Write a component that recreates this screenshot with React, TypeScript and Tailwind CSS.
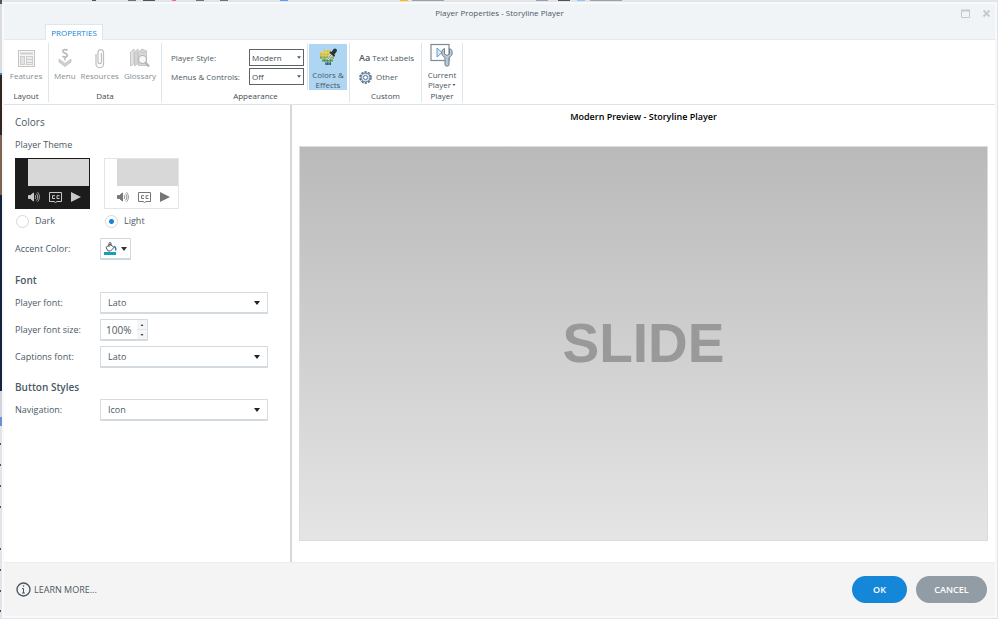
import { useState } from 'react'
import type { ReactNode } from 'react'
import clsx from 'clsx'

// slice of the window that sits behind the dialog, top to bottom
const backdropEdge = [
  { className: 'h-1 bg-gray-600' },
  { className: 'h-[69px] bg-[#dcdcdf]' },
  { className: 'h-[2px] bg-[#2d8fd0]' },
  { className: 'h-[60px] bg-[#33261f]' },
  { className: 'h-[60px] bg-[#7d6450]' },
  { className: 'h-[196px] bg-[#16233f]' },
  { className: 'h-[26px] bg-[#d2d5da]' },
  { className: 'h-[9px] bg-[#6d8fd6]' },
]

const dots = [17, 19, 19, 19, 40, 19, 19, 18]

const topMarks = [
  { left: 'left-[92px]', color: 'bg-gray-600', width: 'w-1' },
  { left: 'left-[128px]', color: 'bg-gray-500', width: 'w-2' },
  { left: 'left-[143px]', color: 'bg-gray-600', width: 'w-3' },
  { left: 'left-[172px]', color: 'bg-rose-400', width: 'w-1' },
  { left: 'left-[196px]', color: 'bg-slate-500', width: 'w-2' },
  { left: 'left-[220px]', color: 'bg-slate-500', width: 'w-2' },
  { left: 'left-[280px]', color: 'bg-blue-400', width: 'w-2' },
  { left: 'left-[400px]', color: 'bg-amber-400', width: 'w-2' },
  { left: 'left-[412px]', color: 'bg-gray-400', width: 'w-8' },
  { left: 'left-[536px]', color: 'bg-gray-400', width: 'w-3' },
  { left: 'left-[558px]', color: 'bg-gray-600', width: 'w-3' },
  { left: 'left-[577px]', color: 'bg-blue-300', width: 'w-2' },
  { left: 'left-[590px]', color: 'bg-gray-400', width: 'w-8' },
]

function FeaturesIcon() {
  return (
    <svg width="19" height="19" viewBox="0 0 19 19" fill="none" stroke="#cdcdcd">
      <rect x="1.500" y="1.500" width="16" height="16" fill="#f6f6f6" stroke="#c4c4c4" />
      <path d="M3 4.500h13" strokeWidth="2" stroke="#cfcfcf" />
      <rect x="3.500" y="7.500" width="4" height="8" fill="#e3e3e3" />
      <rect x="9.500" y="7.500" width="6" height="8" fill="#ececec" />
      <path d="M10 10.500h5M10 13.500h5" />
    </svg>
  )
}

function MenuIcon() {
  return (
    <svg width="14" height="20" viewBox="0 0 14 20" fill="none" stroke="#bdbdbd">
      <path d="M9.500 2.500C8 1 4.700 1.500 5 3.700c.4 1.600 4.300 1.300 4.300 3.500S5.500 9.500 4.500 8" strokeWidth="1.800" />
      <path d="M7 9.500v3" strokeWidth="1.500" />
      <path d="M1 11l6 4.500 6-4.500v3l-6 4.500-6-4.500z" fill="#d0d0d0" stroke="#c2c2c2" strokeWidth=".8" />
    </svg>
  )
}

function ClipIcon() {
  return (
    <svg width="12" height="22" viewBox="0 0 12 22" fill="none" stroke="#bdbdbd" strokeWidth="1.200">
      <path d="M2 7v10a3.500 3.500 0 0 0 7.500 0V4.500a3 3 0 0 0-5.500 0V15a1.700 1.700 0 0 0 3.400 0V6" />
    </svg>
  )
}

function GlossaryIcon() {
  return (
    <svg width="21" height="22" viewBox="0 0 21 22" fill="#e2e2e2" stroke="#c6c6c6">
      <path d="M1.500 5L5 2v14.500l-3.500 2.500z" />
      <path d="M5.500 5L9 2v14.500l-3.500 2.500z" fill="#d3d3d3" />
      <path d="M9.500 5L13 2l4.500 2v14.500h-8z" fill="#d9d9d9" />
      <path d="M11 4.500l4 1.500 2.500-2" fill="none" />
      <circle cx="13.500" cy="12.500" r="4" fill="#f6f6f6" stroke="#b4b4b4" strokeWidth="1.200" />
      <path d="M16.500 15.500l3.500 4" stroke="#b4b4b4" strokeWidth="2.200" />
    </svg>
  )
}

function PaletteIcon() {
  return (
    <svg width="19" height="18" viewBox="0 0 19 18">
      <path d="M4 2h8v3H1V4h3z" fill="#dcc050" />
      <path d="M1 5h12v3H1z" fill="#c9b83a" />
      <path d="M1 8h14v3H1z" fill="#7fa544" />
      <path d="M3 11h11v3H3z" fill="#33876f" />
      <path d="M6 14h6v3H6z" fill="#215f92" />
      <path d="M4 2v12M7 1v16M10 2v15M13 6v8M1 5h11M1 8h14M1 11h14M3 14h11" stroke="#efe9a8" strokeWidth=".5" fill="none" />
      <path d="M9 11l4-5" stroke="#fff" strokeWidth="2" strokeLinecap="round" />
      <path d="M8.500 11.500l4-5" stroke="#5f7785" strokeWidth="1" />
      <path d="M11.500 4.500l3.500 3" stroke="#2b3238" strokeWidth="2" strokeLinecap="round" />
      <path d="M14.500 4.500l1.500-2" stroke="#2b3238" strokeWidth="3.800" strokeLinecap="round" />
    </svg>
  )
}

function GearIcon() {
  return (
    <svg width="13" height="13" viewBox="0 0 14 14" fill="none" stroke="#52708c">
      <circle cx="7" cy="7" r="6" strokeWidth="1.600" strokeDasharray="2.600 1.170" />
      <circle cx="7" cy="7" r="4.800" fill="#d5e2ee" />
      <circle cx="7" cy="7" r="2.200" fill="#fff" />
    </svg>
  )
}

function CurrentPlayerIcon() {
  return (
    <svg width="23" height="24" viewBox="0 0 23 24" fill="none">
      <rect x="1" y="1.500" width="18" height="16" fill="#fff" stroke="#7d8a94" strokeWidth="1.200" />
      <path d="M7 5v9l5-4.500z" fill="#d5e8f8" stroke="#6b9cc9" />
      <path
        d="M14.500 5.500c-3.500 1-4 7 .5 9v7.500c0 1.500 4 1.500 4 0v-7.500c4.500-2 4-8 .5-9v5.500l-2.500 1.500-2.500-1.500z"
        fill="#bac8d6"
        stroke="#6c7f90"
      />
    </svg>
  )
}

function Caret({ className }: { className?: string }) {
  return (
    <svg className={clsx('pointer-events-none', className)} width="6" height="4" viewBox="0 0 6 4" fill="currentColor">
      <path d="M0 0h6L3 4z" />
    </svg>
  )
}

function RibbonGroup({ title, children, className }: { title: string; children: ReactNode; className?: string }) {
  return (
    <section className={clsx('flex flex-col border-r border-[#dfe5e8] text-center', className)}>
      <div className="flex h-[47px]">{children}</div>
      <h2 className="h-3 text-[8px] leading-3 text-[#3f4b54]">{title}</h2>
    </section>
  )
}

function RibbonButton({ label, icon }: { label: string; icon: ReactNode }) {
  return (
    <button type="button" disabled className="flex flex-col items-center gap-px px-px pt-1 text-[#858e95]">
      <span className="flex h-[22px] items-center">{icon}</span>
      <span className="leading-3">{label}</span>
    </button>
  )
}

interface RibbonSelectProps {
  id: string
  label: string
  options: string[]
}

function RibbonSelect({ id, label, options }: RibbonSelectProps) {
  return (
    <div className="flex items-center">
      <label htmlFor={id} className="w-[78px] text-left">{label}</label>
      <div className="relative">
        <select id={id} className="block h-[17px] w-[55px] appearance-none border border-[#5d6468] bg-white pl-0.5 text-[8px] text-[#3f4b54]">
          {options.map((o) => <option key={o}>{o}</option>)}
        </select>
        <Caret className="absolute top-[7px] right-[3px] h-[3px] w-1" />
      </div>
    </div>
  )
}

function ThemeCard({ dark }: { dark?: boolean }) {
  return (
    <div
      className={clsx(
        'flex h-[51px] w-[75px] flex-col border',
        dark ? 'border-[#1c1c1c] bg-[#1c1c1c] text-[#c9c9c9]' : 'border-[#e4e4e4] bg-white text-[#777]'
      )}
    >
      <div className="ml-3 h-[27px] bg-[#d8d8d8]" />
      <div className="flex grow items-center justify-between pr-2 pl-3">
        <svg width="12" height="12" viewBox="0 0 12 12" fill="none" stroke="currentColor">
          <path d="M.5 4.500h2l3-2.500v8l-3-2.500h-2z" fill="currentColor" />
          <path d="M7 4c1 1 1 3 0 4M8.300 2.500c2 2 2 5 0 7M9.500 1.200c2.500 2.700 2.500 7 0 9.600" strokeWidth=".8" />
        </svg>
        <svg width="13" height="12" viewBox="0 0 13 12" fill="none" stroke="currentColor">
          <path d="M.5 1.500h12v9H8l-1.500 1-1.500-1H.5z" />
          <path d="M6 4.700H3.500v2.800H6M10.500 4.700H8v2.800h2.500" />
        </svg>
        <svg width="10" height="10" viewBox="0 0 10 10" fill="currentColor">
          <path d="M0 0l10 5-10 5z" />
        </svg>
      </div>
    </div>
  )
}

function PanelSelect({ id, label, options }: { id: string; label: string; options: string[] }) {
  return (
    <div className="flex items-center">
      <label htmlFor={id} className="w-[85px] shrink-0">{label}</label>
      <div className="relative w-[168px]">
        <select
          id={id}
          className="block h-[22px] w-full appearance-none rounded-[1px] border border-b-2 border-[#d3dbe0] bg-white pl-[7px] text-[9px]"
        >
          {options.map((o) => <option key={o}>{o}</option>)}
        </select>
        <Caret className="absolute top-[9px] right-2 text-[#222]" />
      </div>
    </div>
  )
}

export default function App() {
  const [theme, setTheme] = useState('light')

  return (
    <div className="relative flex min-h-screen bg-[#e3e4e8] font-['Open_Sans',sans-serif] text-[8px] text-[#4b5963]">
      {topMarks.map((m) => (
        <span key={m.left} className={clsx('absolute top-0 h-px', m.left, m.color, m.width)} />
      ))}
      <div className="w-0.5 shrink-0">
        {backdropEdge.map((s, i) => <div key={i} className={s.className} />)}
        {dots.map((gap, i) => (
          <div key={i} style={{ paddingTop: gap }}>
            <div className="h-0.5 w-px bg-gray-600" />
          </div>
        ))}
      </div>

      <div className="mt-0.5 mr-px mb-px flex grow flex-col border-2 border-[#f8f9fa] bg-white">
        <header className="flex h-9 flex-col bg-[#f0f4f7]">
          <div className="relative h-5 text-center leading-[18px]">
            <h1>Player Properties - Storyline Player</h1>
            <div className="absolute top-[5px] right-1 flex gap-3 text-[#c5c9cc]">
              <button type="button" aria-label="Maximize">
                <svg width="9" height="9" viewBox="0 0 9 9" fill="none" stroke="currentColor">
                  <path d="M.5 1.500h8v7h-8z" />
                  <path d="M0 1.500h9" strokeWidth="2" />
                </svg>
              </button>
              <button type="button" aria-label="Close">
                <svg width="9" height="9" viewBox="0 0 9 9" fill="none" stroke="currentColor" strokeWidth="1.800">
                  <path d="M1.500 1.500l6 6M7.500 1.500l-6 6" />
                </svg>
              </button>
            </div>
          </div>
          <nav className="flex grow border-b border-[#e4e9ec] pl-[41px]">
            <button type="button" className="-mb-px h-4 w-[58px] border border-b-0 border-[#dfe5e8] bg-white text-[#1583d6]">
              PROPERTIES
            </button>
          </nav>
        </header>

        <div className="flex h-[65px] border-b border-[#dde3e7] pt-[3px] pb-0.5">
          <RibbonGroup title="Layout" className="w-[45px] *:justify-center">
            <RibbonButton label="Features" icon={<FeaturesIcon />} />
          </RibbonGroup>
          <RibbonGroup title="Data" className="w-[113px] *:justify-center *:gap-[3px]">
            <RibbonButton label="Menu" icon={<MenuIcon />} />
            <RibbonButton label="Resources" icon={<ClipIcon />} />
            <RibbonButton label="Glossary" icon={<GlossaryIcon />} />
          </RibbonGroup>
          <RibbonGroup title="Appearance" className="w-[188px]">
            <div className="flex w-full justify-between pr-0.5 pl-[9px]">
              <div className="flex flex-col gap-0.5 pt-1.5">
                <RibbonSelect id="player-style" label="Player Style:" options={['Modern', 'Classic']} />
                <RibbonSelect id="menus-controls" label="Menus & Controls:" options={['Off', 'On']} />
              </div>
              <div className="border-l border-[#dfe5e8] pt-px pl-px">
                <button type="button" className="flex h-[46px] w-[38px] flex-col items-center justify-between bg-[#aed5f1] pt-1 leading-[10px]">
                  <PaletteIcon />
                  <span>Colors &amp; Effects</span>
                </button>
              </div>
            </div>
          </RibbonGroup>
          <RibbonGroup title="Custom" className="w-[72px]">
            <div className="flex flex-col gap-[5px] pt-2 pl-[9px] leading-3">
              <button type="button" className="flex h-[14px] items-center gap-0.5">
                <span className="text-[9px] font-semibold">Aa</span>
                <span>Text Labels</span>
              </button>
              <button type="button" className="flex h-[14px] items-center gap-1">
                <GearIcon />
                <span>Other</span>
              </button>
            </div>
          </RibbonGroup>
          <RibbonGroup title="Player" className="w-[41px] *:justify-center">
            <button type="button" className="flex flex-col items-center justify-between">
              <CurrentPlayerIcon />
              <span className="flex flex-col items-center leading-[10px]">
                <span>Current</span>
                <span className="flex items-center gap-px">
                  Player
                  <Caret className="h-[2px] w-1" />
                </span>
              </span>
            </button>
          </RibbonGroup>
        </div>

        <main className="flex grow">
          <aside className="w-72 shrink-0 border-r-2 border-[#d3d8dd] pt-[9px] pl-[11px] text-[9px] leading-4">
            <h2 className="text-[10px]">Colors</h2>
            <fieldset className="mt-[7px]">
              <legend>Player Theme</legend>
              <div className="flex gap-[14px] pt-[5px]">
                {['dark', 'light'].map((name) => (
                  <label key={name} className="flex flex-col gap-1">
                    <ThemeCard dark={name === 'dark'} />
                    <span className="flex items-center gap-[6px] pl-px capitalize">
                      <input
                        type="radio"
                        name="theme"
                        checked={theme === name}
                        onChange={() => setTheme(name)}
                        className="size-[13px] appearance-none rounded-full border border-[#cfdae1] bg-white checked:bg-[radial-gradient(circle,#1583d6_0_2px,#fff_3px)]"
                      />
                      {name}
                    </span>
                  </label>
                ))}
              </div>
            </fieldset>
            <div className="mt-[9px] flex items-center">
              <span className="w-[85px]">Accent Color:</span>
              <button
                type="button"
                aria-label="Accent Color"
                className="flex h-[22px] w-[31px] items-center justify-between rounded-[1px] border border-b-2 border-[#cfd8de] px-[3px] text-[#333]"
              >
                <svg width="13" height="13" viewBox="0 0 13 13" fill="none" stroke="#555">
                  <path d="M2 5.500L6 2l4 3.500-3.500 3.500H4zM5 5V1.500a1 1 0 0 1 2 0V4" />
                  <path d="M10 4.500c2 .5 2 2.500 1.500 4" stroke="#2c7fb8" strokeWidth="1.500" />
                  <path d="M0 11.500h12" stroke="#16a0bc" strokeWidth="3" />
                </svg>
                <Caret />
              </button>
            </div>

            <h2 className="mt-3 text-[10px] font-semibold">Font</h2>
            <div className="mt-1 flex flex-col gap-[5px]">
              <PanelSelect id="player-font" label="Player font:" options={['Lato', 'Open Sans']} />
              <div className="flex items-center">
                <label htmlFor="font-size" className="w-[85px]">Player font size:</label>
                <div className="flex h-[22px] w-12 rounded-[1px] border border-b-2 border-[#d3dbe0]">
                  <input id="font-size" defaultValue="100%" className="w-[36px] pl-[5px] text-[10px]" />
                  <div className="flex w-[10px] flex-col bg-[#f3f5f6] text-[#444]">
                    <button type="button" aria-label="Increase" className="flex grow items-center justify-center border-b border-[#e0e5e8]">
                      <Caret className="h-[2px] w-1 rotate-180" />
                    </button>
                    <button type="button" aria-label="Decrease" className="flex grow items-center justify-center">
                      <Caret className="h-[2px] w-1" />
                    </button>
                  </div>
                </div>
              </div>
              <PanelSelect id="captions-font" label="Captions font:" options={['Lato', 'Open Sans']} />
            </div>

            <h2 className="mt-[11px] mb-1 text-[10px] font-semibold">Button Styles</h2>
            <PanelSelect id="navigation" label="Navigation:" options={['Icon', 'Text', 'Icon and text']} />
          </aside>

          <section className="flex grow flex-col px-[7px] pb-[21px]">
            <h2 className="h-[41px] pt-1 text-center text-[9px] leading-4 font-semibold text-black">
              Modern Preview - Storyline Player
            </h2>
            <div className="flex grow items-center justify-center border border-[#dcdcdc] bg-linear-to-b from-[#bababa] to-[#e5e5e5] font-['Liberation_Sans',sans-serif] text-[55px] font-bold text-[#999]">
              SLIDE
            </div>
          </section>
        </main>

        <footer className="flex h-[54px] items-center border-t border-[#ececec] bg-[#f4f4f4] pr-2 pl-3">
          <a href="#learn" className="flex items-center gap-[3px] text-[9px] text-[#4b5963]">
            <svg width="15" height="15" viewBox="0 0 15 15" fill="none" stroke="currentColor">
              <circle cx="7.500" cy="7.500" r="6.500" strokeWidth="1.400" />
              <path d="M6 6.500h1.500V11M6 11h3" />
              <circle cx="7.500" cy="4" r=".8" fill="currentColor" stroke="none" />
            </svg>
            LEARN MORE...
          </a>
          <div className="ml-auto flex gap-[9px] text-[9px] font-semibold text-white">
            <button type="button" className="h-[27px] w-[55px] rounded-full bg-[#1587d8]">OK</button>
            <button type="button" className="h-[27px] w-[71px] rounded-full bg-[#929ca5]">CANCEL</button>
          </div>
        </footer>
      </div>
    </div>
  )
}
